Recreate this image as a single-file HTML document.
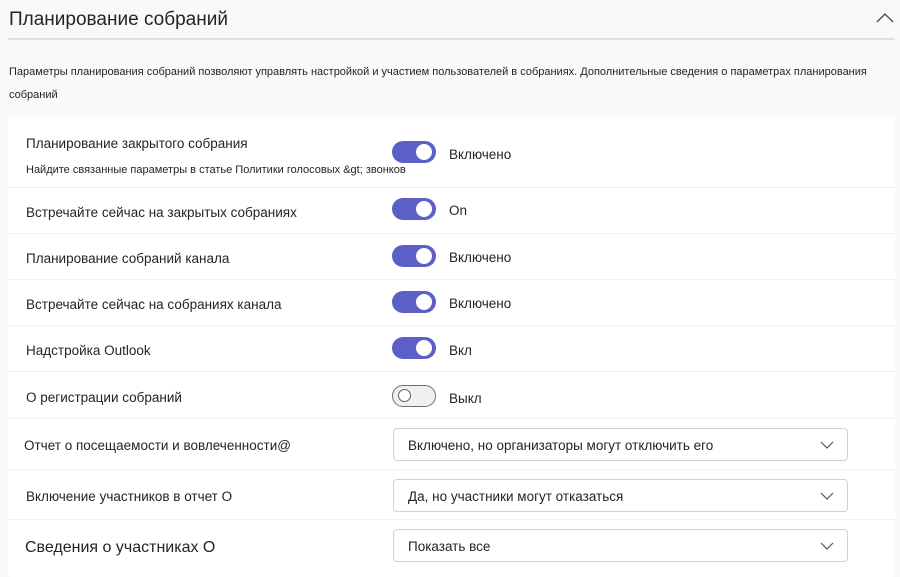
<!DOCTYPE html>
<html><head><meta charset="utf-8"><style>
body{margin:0;width:900px;height:570px;background:#f9f9f9;font-family:"Liberation Sans","Noto Sans CJK SC",sans-serif;color:#242424;position:relative;overflow:hidden}
.a{position:absolute;white-space:nowrap}
.card{position:absolute;left:8px;top:117px;width:887px;height:460px;background:#fff;border-radius:4px}
.sep{position:absolute;left:8px;width:887px;height:1px;background:#f0f0f0}
.lbl{font-size:13.5px;left:26px}
.tg{position:absolute;left:392px;width:44px;height:22px;border-radius:11px;background:#5b5fc7}
.tg::after{content:"";position:absolute;right:4px;top:3px;width:16px;height:16px;border-radius:50%;background:#fff}
.tg.off{background:#f0f0f0;border:1px solid #707070;box-sizing:border-box}
.tg.off::after{left:5px;right:auto;top:3px;width:13px;height:13px;border:1px solid #616161;box-sizing:border-box}
.st{left:449px;font-size:13.5px}
.dd{position:absolute;left:393px;width:455px;height:33px;border:1px solid #d1d1d1;border-radius:4px;box-sizing:border-box;font-size:13.5px;line-height:34px;padding-left:14px;background:#fff}
.dd svg{position:absolute;right:13px;top:12px}
</style></head><body>
<div class="a" style="left:9px;top:9px;font-size:19px">Планирование собраний</div>
<svg class="a" style="left:876px;top:12px" width="18" height="12"><path d="M1 10 L9 2 L17 10" fill="none" stroke="#444" stroke-width="1.3"/></svg>
<div class="a" style="left:8px;top:38px;width:887px;height:2px;background:#e0e0e0"></div>
<div class="a" style="left:9px;top:66px;font-size:11px">Параметры планирования собраний позволяют управлять настройкой и участием пользователей в собраниях. Дополнительные сведения о параметрах планирования</div>
<div class="a" style="left:9px;top:89px;font-size:11px">собраний</div>
<div class="card"></div>
<div class="a lbl" style="top:136px">Планирование закрытого собрания</div>
<div class="a" style="left:26px;top:164px;font-size:11px">Найдите связанные параметры в статье Политики голосовых &amp;gt; звонков</div>
<div class="tg" style="top:141px"></div><div class="a st" style="top:147px">Включено</div>
<div class="sep" style="top:187px"></div>
<div class="a lbl" style="top:205px">Встречайте сейчас на закрытых собраниях</div>
<div class="tg" style="top:198px"></div><div class="a st" style="top:203px">On</div>
<div class="sep" style="top:233px"></div>
<div class="a lbl" style="top:251px">Планирование собраний канала</div>
<div class="tg" style="top:245px"></div><div class="a st" style="top:250px">Включено</div>
<div class="sep" style="top:279px"></div>
<div class="a lbl" style="top:297px">Встречайте сейчас на собраниях канала</div>
<div class="tg" style="top:291px"></div><div class="a st" style="top:296px">Включено</div>
<div class="sep" style="top:325px"></div>
<div class="a lbl" style="top:343px">Надстройка Outlook</div>
<div class="tg" style="top:337px"></div><div class="a st" style="top:343px">Вкл</div>
<div class="sep" style="top:371px"></div>
<div class="a lbl" style="top:390px">О регистрации собраний</div>
<div class="tg off" style="top:385px"></div><div class="a st" style="top:391px">Выкл</div>
<div class="sep" style="top:418px"></div>
<div class="a lbl" style="left:24px;top:438px">Отчет о посещаемости и вовлеченности@</div>
<div class="dd" style="top:428px">Включено, но организаторы могут отключить его<svg width="14" height="8"><path d="M1 1 L7 7 L13 1" fill="none" stroke="#555" stroke-width="1.2"/></svg></div>
<div class="sep" style="top:469px"></div>
<div class="a lbl" style="top:489px">Включение участников в отчет О</div>
<div class="dd" style="top:479px">Да, но участники могут отказаться<svg width="14" height="8"><path d="M1 1 L7 7 L13 1" fill="none" stroke="#555" stroke-width="1.2"/></svg></div>
<div class="sep" style="top:519px"></div>
<div class="a" style="left:25px;top:539px;font-size:16px">Сведения о участниках О</div>
<div class="dd" style="top:529px">Показать все<svg width="14" height="8"><path d="M1 1 L7 7 L13 1" fill="none" stroke="#555" stroke-width="1.2"/></svg></div>
</body></html>
